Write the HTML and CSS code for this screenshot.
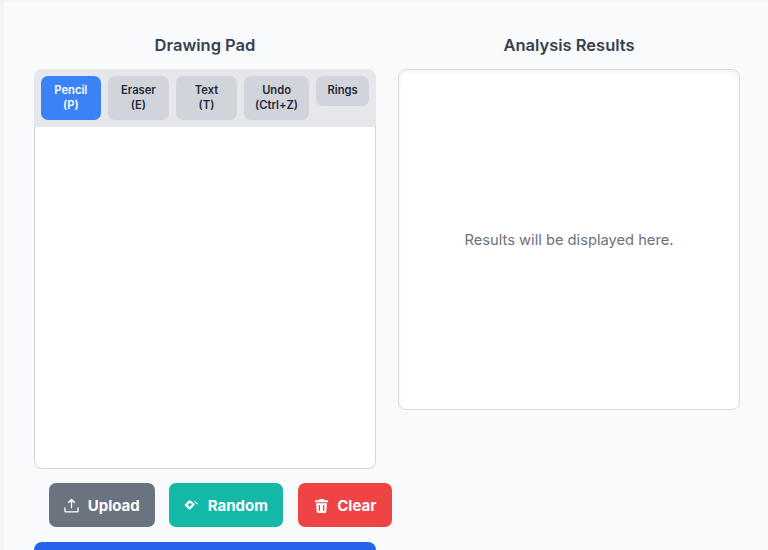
FILE: index.html
```html
<!DOCTYPE html>
<html lang="en">
<head>
    <meta charset="UTF-8">
    <title>Drawing Pad</title>
    <link rel="stylesheet" href="styles.css">
</head>
<body>
    <div class="page">
        <div class="columns">
            <section class="left">
                <h2>Drawing Pad</h2>
                <div class="pad">
                    <div class="toolbar">
                        <button class="tool active">Pencil<br>(P)</button>
                        <button class="tool">Eraser<br>(E)</button>
                        <button class="tool">Text<br>(T)</button>
                        <button class="tool">Undo<br>(Ctrl+Z)</button>
                        <button class="tool">Rings</button>
                    </div>
                    <div class="canvas"></div>
                </div>
                <div class="actions">
                    <button class="action upload">
                        <svg class="icon" viewBox="0 0 16 16" fill="none" stroke="currentColor" stroke-width="1.4" stroke-linecap="round" stroke-linejoin="round"><path d="M8 10.500V1.800M4.800 4.800 8 1.600l3.200 3.200M1 10.500v3a1.200 1.200 0 0 0 1.200 1.200h11.600a1.200 1.200 0 0 0 1.200-1.200v-3"/></svg>
                        Upload
                    </button>
                    <button class="action random">
                        <svg class="icon" viewBox="0 0 16 16" fill="currentColor"><path fill-rule="evenodd" d="M0.500 7.500 5.500 2.500 8 3.500 11.500 7 6.500 12.500 4.500 11.500ZM4 7.500 6 9.500 8.500 7 6.500 5Z"/><path d="M10 3.500 12 3.500 16 7 12.500 6Z" opacity="0.7"/></svg>
                        Random
                    </button>
                    <button class="action clear">
                        <svg class="icon" viewBox="0 0 16 16" fill="currentColor"><path d="M5.500 1h5l.6 1.500H15v2H1v-2h3.900ZM2.200 5.500h11.600l-.7 9a1.500 1.500 0 0 1-1.500 1.400H4.400a1.500 1.500 0 0 1-1.500-1.400ZM5 7.500v6h1.500v-6ZM9.500 7.500v6H11v-6Z" fill-rule="evenodd"/></svg>
                        Clear
                    </button>
                </div>
                <div class="analyze"></div>
            </section>
            <section class="right">
                <h2>Analysis Results</h2>
                <div class="results">
                    <p>Results will be displayed here.</p>
                </div>
            </section>
        </div>
    </div>
</body>
</html>
```

FILE: styles.css
```css
html, body {
    margin: 0;
    padding: 0;
    height: 550px;
    overflow: hidden;
}
body {
    font-family: Inter, 'Liberation Sans', sans-serif;
    background-color: #f3f4f6;
}
.page {
    margin: 2px 0 0 4px;
    padding: 31px 28px 0 30px;
    height: 517px;
    background-color: #f9fafb;
}
.columns {
    display: flex;
    gap: 22px;
}
.left {
    width: 342px;
}
.right {
    width: 342px;
}
h2 {
    margin: 0 0 12px 0;
    font-size: 16.500px;
    line-height: 24px;
    font-weight: 600;
    color: #374151;
    text-align: center;
}
.pad {
    border-radius: 8px;
    overflow: hidden;
    background-color: #e5e7eb;
}
.toolbar {
    display: flex;
    align-items: flex-start;
    gap: 7.500px;
    padding: 7px;
    height: 44px;
}
.tool {
    border: none;
    border-radius: 7px;
    padding: 7px 0 8px;
    font-family: inherit;
    font-size: 11.200px;
    line-height: 14.500px;
    font-weight: 600;
    color: #1f2937;
    background-color: #d1d5db;
}
.tool:nth-child(1) { width: 60px; }
.tool:nth-child(2) { width: 61px; }
.tool:nth-child(3) { width: 61px; }
.tool:nth-child(4) { width: 65px; }
.tool:nth-child(5) { width: 53px; }
.tool.active {
    background-color: #3b82f6;
    color: #ffffff;
}
.canvas {
    height: 341px;
    background-color: #ffffff;
    border: 1px solid #d1d5db;
    border-top: none;
    border-radius: 0 0 8px 8px;
}
.actions {
    display: flex;
    gap: 14px;
    width: 360px;
    margin: 14px 0 0 15px;
}
.action {
    display: flex;
    align-items: center;
    justify-content: center;
    gap: 8.500px;
    height: 44px;
    border: none;
    border-radius: 7px;
    font-family: inherit;
    font-size: 15px;
    font-weight: 700;
    color: #ffffff;
}
.icon {
    width: 15px;
    height: 15px;
}
.upload { width: 106px; background-color: #6b7280; }
.random { width: 114px; background-color: #14b8a6; }
.clear { width: 94px; margin-left: 1px; background-color: #ef4444; }
.analyze {
    height: 44px;
    margin-top: 15px;
    border-radius: 8px;
    background-color: #2563eb;
}
.results {
    display: flex;
    align-items: center;
    justify-content: center;
    height: 339px;
    background-color: #ffffff;
    border: 1px solid #d9dce1;
    border-radius: 8px;
    box-shadow: inset 0 2px 4px rgba(0, 0, 0, 0.06);
}
.results p {
    margin: 0;
    font-size: 14.700px;
    color: #6b7280;
}
```
